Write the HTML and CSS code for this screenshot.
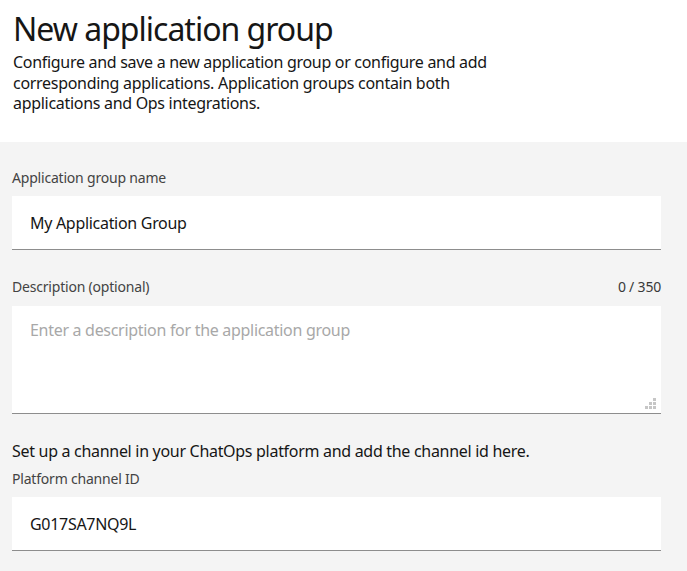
FILE: index.html
```html
<!DOCTYPE html>
<html lang="en">
<head>
<meta charset="utf-8">
<title>New application group</title>
<link rel="stylesheet" href="styles.css">
</head>
<body>
<header class="page-header">
  <h1 class="title">New application group</h1>
  <p class="intro">Configure and save a new application group or configure and add<br>corresponding applications. Application groups contain both<br>applications and Ops integrations.</p>
</header>
<main class="form">
  <div class="field">
    <label class="label" for="name">Application group name</label>
    <input class="input" id="name" type="text" value="My Application Group">
  </div>
  <div class="field field-desc">
    <div class="label-row">
      <label class="label" for="desc">Description (optional)</label>
      <span class="counter">0 / 350</span>
    </div>
    <div class="textarea-wrap">
      <textarea class="textarea" id="desc" placeholder="Enter a description for the application group"></textarea>
      <svg class="grip" width="12" height="12" viewBox="0 0 12 12" aria-hidden="true">
        <rect x="8" y="0" width="3" height="3"/>
        <rect x="4" y="4" width="3" height="3"/>
        <rect x="8" y="4" width="3" height="3"/>
        <rect x="0" y="8" width="3" height="3"/>
        <rect x="4" y="8" width="3" height="3"/>
        <rect x="8" y="8" width="3" height="3"/>
      </svg>
    </div>
  </div>
  <p class="helper">Set up a channel in your ChatOps platform and add the channel id here.</p>
  <div class="field field-channel">
    <label class="label" for="channel">Platform channel ID</label>
    <input class="input" id="channel" type="text" value="G017SA7NQ9L">
  </div>
</main>
</body>
</html>
```
FILE: styles.css
```css
html, body {
  margin: 0;
  padding: 0;
  background: #f4f4f4;
  font-family: "Noto Sans", "Liberation Sans", sans-serif;
  color: #161616;
}
.page-header {
  background: #ffffff;
  height: 142px;
  box-sizing: border-box;
  padding: 9px 13px 0;
}
.title {
  margin: 0;
  font-size: 32px;
  font-weight: 400;
  line-height: 40px;
  letter-spacing: -1px;
  color: #161616;
}
.intro {
  margin: 3px 0 0;
  font-size: 16px;
  line-height: 20.5px;
  letter-spacing: -0.3px;
  color: #161616;
}
.form {
  padding: 27px 26px 20px 12px;
}
.field {
  display: flex;
  flex-direction: column;
}
.label-row {
  display: flex;
  justify-content: space-between;
  align-items: center;
  margin-bottom: 10px;
}
.label {
  font-size: 14px;
  line-height: 18px;
  letter-spacing: -0.2px;
  color: #434343;
  margin-bottom: 9px;
}
.label-row .label {
  margin-bottom: 0;
}
.counter {
  font-size: 14px;
  line-height: 18px;
  letter-spacing: -0.2px;
  color: #393939;
}
.input {
  display: block;
  height: 54px;
  box-sizing: border-box;
  border: 0;
  border-bottom: 1px solid #8d8d8d;
  background: #ffffff;
  padding: 0 18px;
  font-family: inherit;
  font-size: 16px;
  letter-spacing: -0.3px;
  color: #161616;
  outline: none;
  margin: 0;
}
.field-desc {
  margin-top: 28px;
}
.textarea-wrap {
  position: relative;
}
.textarea {
  display: block;
  width: 100%;
  height: 108px;
  box-sizing: border-box;
  border: 0;
  border-bottom: 1px solid #8d8d8d;
  background: #ffffff;
  padding: 13px 18px;
  font-family: inherit;
  font-size: 16px;
  line-height: 22px;
  letter-spacing: -0.3px;
  color: #161616;
  resize: none;
  outline: none;
  margin: 0;
}
.textarea::placeholder {
  color: #a8a8a8;
}
.grip {
  position: absolute;
  right: 4px;
  bottom: 4px;
  fill: #c6c6c6;
}
.helper {
  margin: 27px 0 0;
  font-size: 16px;
  line-height: 20px;
  letter-spacing: -0.3px;
  color: #161616;
}
.field-channel {
  margin-top: 9px;
}
```
